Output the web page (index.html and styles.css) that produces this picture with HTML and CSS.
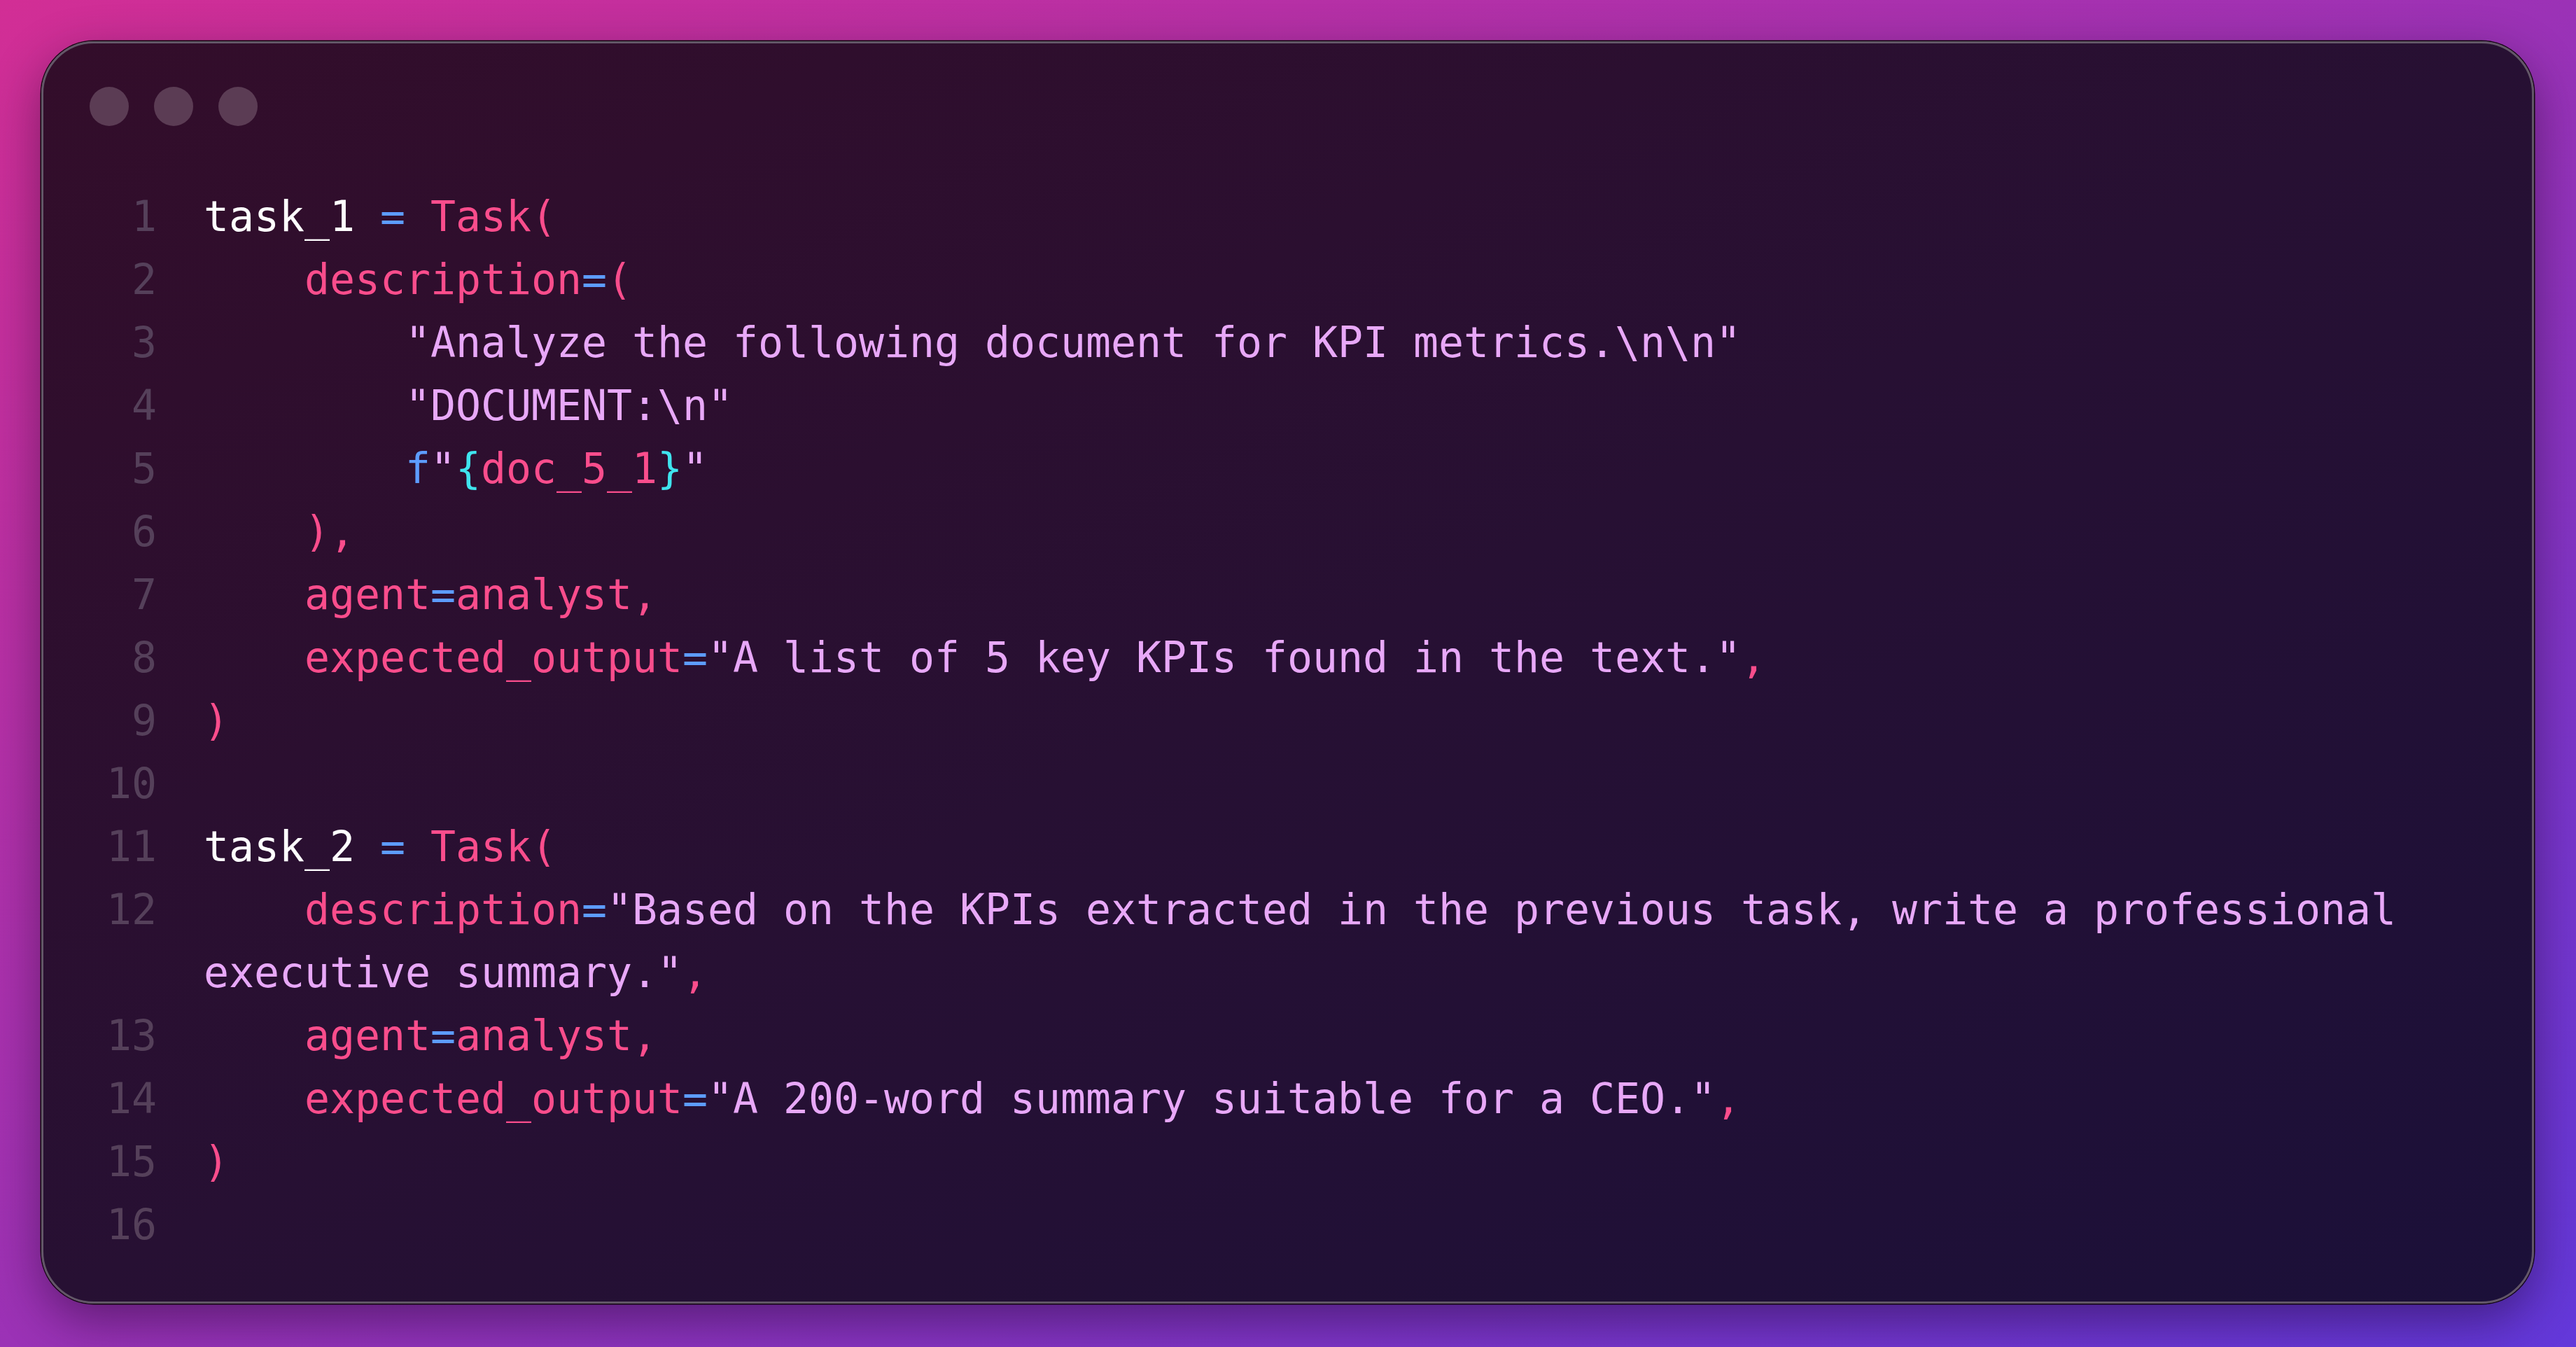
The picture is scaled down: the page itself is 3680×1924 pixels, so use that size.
FILE: index.html
```html
<!DOCTYPE html>
<html lang="en">
<head>
<meta charset="utf-8">
<title>Code</title>
<link rel="stylesheet" href="styles.css">
</head>
<body>
<div class="stage">
  <div class="window">
    <div class="titlebar">
      <span class="dot"></span><span class="dot"></span><span class="dot"></span>
    </div>
    <div class="code">
      <div class="ln">1</div><div class="lc"><span class="w">task_1</span> <span class="b">=</span> <span class="p">Task(</span></div>
      <div class="ln">2</div><div class="lc">    <span class="p">description</span><span class="b">=</span><span class="p">(</span></div>
      <div class="ln">3</div><div class="lc">        <span class="s">"Analyze the following document for KPI metrics.\n\n"</span></div>
      <div class="ln">4</div><div class="lc">        <span class="s">"DOCUMENT:\n"</span></div>
      <div class="ln">5</div><div class="lc">        <span class="b">f</span><span class="s">"</span><span class="c">{</span><span class="p">doc_5_1</span><span class="c">}</span><span class="s">"</span></div>
      <div class="ln">6</div><div class="lc">    <span class="p">),</span></div>
      <div class="ln">7</div><div class="lc">    <span class="p">agent</span><span class="b">=</span><span class="p">analyst,</span></div>
      <div class="ln">8</div><div class="lc">    <span class="p">expected_output</span><span class="b">=</span><span class="s">"A list of 5 key KPIs found in the text."</span><span class="p">,</span></div>
      <div class="ln">9</div><div class="lc"><span class="p">)</span></div>
      <div class="ln">10</div><div class="lc"></div>
      <div class="ln">11</div><div class="lc"><span class="w">task_2</span> <span class="b">=</span> <span class="p">Task(</span></div>
      <div class="ln">12</div><div class="lc">    <span class="p">description</span><span class="b">=</span><span class="s">"Based on the KPIs extracted in the previous task, write a professional executive summary."</span><span class="p">,</span></div>
      <div class="ln">13</div><div class="lc">    <span class="p">agent</span><span class="b">=</span><span class="p">analyst,</span></div>
      <div class="ln">14</div><div class="lc">    <span class="p">expected_output</span><span class="b">=</span><span class="s">"A 200-word summary suitable for a CEO."</span><span class="p">,</span></div>
      <div class="ln">15</div><div class="lc"><span class="p">)</span></div>
      <div class="ln">16</div><div class="lc"></div>
    </div>
  </div>
</div>
</body>
</html>
```

FILE: styles.css
```css
html, body {
  margin: 0;
  padding: 0;
}

body {
  width: 3680px;
  height: 1924px;
  overflow: hidden;
  background: linear-gradient(to bottom right, #d22e95 0%, #9b32b6 50%, #6338da 100%);
  font-family: "DejaVu Sans Mono", "Liberation Mono", monospace;
}

.stage {
  box-sizing: border-box;
  height: 1924px;
  padding: 59px 60px 62px 59px;
  display: flex;
}

.window {
  flex: 1;
  display: flex;
  flex-direction: column;
  border: 3px solid #625767;
  border-radius: 75px;
  background: linear-gradient(to bottom right, #330d2a 0%, #271033 50%, #1b1039 100%);
  box-shadow:
    0 0 0 1.5px #12070f,
    0 24px 70px rgba(20, 0, 30, 0.45);
}

.titlebar {
  display: flex;
  gap: 36px;
  padding: 62px 0 0 66px;
}

.dot {
  width: 56px;
  height: 56px;
  border-radius: 50%;
  background: #5b3c54;
}

.code {
  display: grid;
  grid-template-columns: 72px 1fr;
  grid-auto-rows: minmax(90px, auto);
  column-gap: 67px;
  padding: 84px 60px 0 90px;
  font-size: 59.8px;
  line-height: 90px;
}

.ln {
  text-align: right;
  color: #55405a;
}

.lc {
  white-space: pre-wrap;
  color: #e8a8f8;
}

.w { color: #ffffff; }
.b { color: #5d9cff; }
.p { color: #fa4d8c; }
.s { color: #e8a8f8; }
.c { color: #3fe4ee; }
```
